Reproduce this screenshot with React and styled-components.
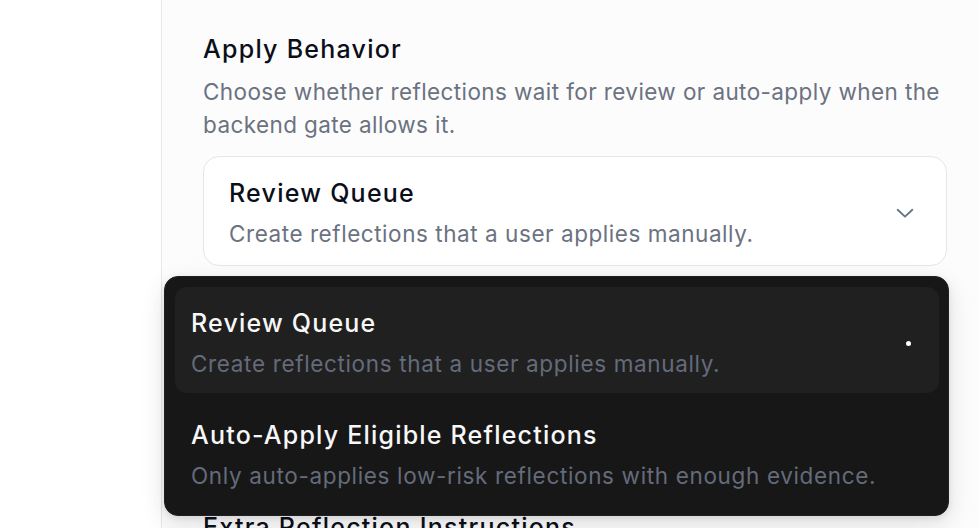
import styled, { createGlobalStyle } from "styled-components";

const Global = createGlobalStyle`
  * { box-sizing: border-box; }
  html, body { margin: 0; padding: 0; }
  body {
    font-family: Inter, "Noto Sans", sans-serif;
    background: #fcfcfd;
    overflow: hidden;
  }
`;

const options = [
  {
    title: "Review Queue",
    description: "Create reflections that a user applies manually.",
  },
  {
    title: "Auto-Apply Eligible Reflections",
    description: "Only auto-applies low-risk reflections with enough evidence.",
  },
];

function Chevron() {
  return (
    <svg width="22" height="22" viewBox="0 0 24 24" fill="none" stroke="#64748b" strokeWidth="2" strokeLinecap="round" strokeLinejoin="round">
      <path d="M4 8.5l8 7.5 8-7.5" />
    </svg>
  );
}

export default function App() {
  const selected = 0;

  return (
    <>
      <Global />
      <Layout>
        <Sidebar />
        <Main>
          <Section>
            <Heading>Apply Behavior</Heading>
            <Description>
              Choose whether reflections wait for review or auto-apply when the backend gate allows it.
            </Description>
            <SelectWrap>
              <Trigger>
                <OptionText>
                  <TriggerTitle>{options[selected].title}</TriggerTitle>
                  <TriggerSub>{options[selected].description}</TriggerSub>
                </OptionText>
                <Chevron />
              </Trigger>
              <Menu>
                {options.map((opt, i) => (
                  <Item key={opt.title} $active={i === selected}>
                    <OptionText>
                      <ItemTitle>{opt.title}</ItemTitle>
                      <ItemSub>{opt.description}</ItemSub>
                    </OptionText>
                    {i === selected && <Dot />}
                  </Item>
                ))}
              </Menu>
            </SelectWrap>
          </Section>
          <NextSection>
            <Heading>Extra Reflection Instructions</Heading>
          </NextSection>
        </Main>
      </Layout>
    </>
  );
}

const Layout = styled.div`
  display: flex;
  height: 528px;
`;

const Sidebar = styled.aside`
  width: 162px;
  flex-shrink: 0;
  background: #ffffff;
  border-right: 1px solid #e5e7eb;
`;

const Main = styled.main`
  flex: 1;
  padding: 33px 31px 0 41px;
`;

const Section = styled.section`
  display: flex;
  flex-direction: column;
`;

const Heading = styled.h2`
  margin: 0;
  font-size: 25px;
  line-height: 32px;
  font-weight: 500;
  color: #0b0f19;
  letter-spacing: 1.25px;
`;

const Description = styled.p`
  margin: 10px 0 0;
  font-size: 22.5px;
  line-height: 33px;
  letter-spacing: 0.4px;
  color: #6b7280;
`;

const SelectWrap = styled.div`
  position: relative;
  margin-top: 15px;
`;

const Trigger = styled.div`
  display: flex;
  align-items: center;
  justify-content: space-between;
  height: 110px;
  padding: 20px 30px 16px 25px;
  background: #ffffff;
  border: 1.5px solid #e4e6eb;
  border-radius: 16px;
`;

const OptionText = styled.div`
  display: flex;
  flex-direction: column;
  gap: 10px;
`;

const TriggerTitle = styled.span`
  font-size: 25px;
  line-height: 32px;
  font-weight: 500;
  letter-spacing: 1.25px;
  color: #0b0f19;
`;

const TriggerSub = styled.span`
  font-size: 22.5px;
  line-height: 30px;
  letter-spacing: 0.55px;
  color: #6b7280;
`;

const Menu = styled.div`
  position: absolute;
  top: calc(100% + 10px);
  left: -39px;
  width: 785px;
  z-index: 10;
  display: flex;
  flex-direction: column;
  gap: 6px;
  padding: 10px 9px 10px 10px;
  background: #171717;
  border: 1px solid #202020;
  border-radius: 14px;
  box-shadow: 0 8px 24px rgba(0, 0, 0, 0.12), 0 2px 6px rgba(0, 0, 0, 0.08);
`;

const Item = styled.div`
  display: flex;
  align-items: center;
  justify-content: space-between;
  height: 106px;
  padding: 20px 28px 14px 16px;
  border-radius: 12px;
  background: ${(p) => (p.$active ? "#202020" : "transparent")};
`;

const ItemTitle = styled.span`
  font-size: 25px;
  line-height: 32px;
  font-weight: 500;
  letter-spacing: 1.2px;
  color: #f7f7f7;
`;

const ItemSub = styled.span`
  font-size: 22.5px;
  line-height: 30px;
  letter-spacing: 0.65px;
  color: #646b7a;
`;

const Dot = styled.span`
  width: 5px;
  height: 5px;
  border-radius: 50%;
  background: #ffffff;
`;

const NextSection = styled.section`
  margin-top: 245px;
`;
